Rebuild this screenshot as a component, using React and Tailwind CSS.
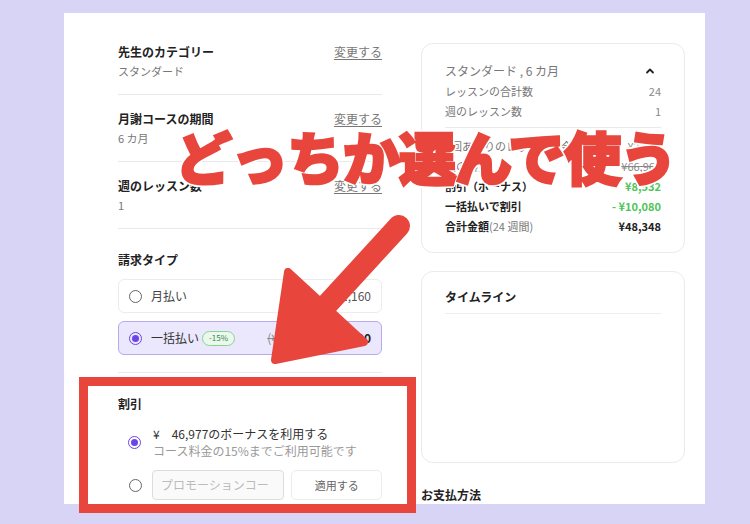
import React from "react";

const font = { fontFamily: '"Noto Sans CJK JP", "Noto Sans", sans-serif' };

function InfoRow({ title, value }) {
  return (
    <div className="flex justify-between items-start border-b border-[#e9e9e9] pt-[14px] pb-[14px]">
      <div>
        <div className="text-[12px] font-bold leading-[20px] text-[#222]">{title}</div>
        <div className="text-[11px] leading-[18px] text-[#777]">{value}</div>
      </div>
      <span className="text-[12px] leading-[20px] text-[#777] underline underline-offset-2">変更する</span>
    </div>
  );
}

function Radio({ checked }) {
  if (checked) {
    return (
      <span className="w-[13px] h-[13px] rounded-full border-[1.5px] border-[#6b46e5] flex items-center justify-center shrink-0">
        <span className="w-[7px] h-[7px] rounded-full bg-[#6b46e5]" />
      </span>
    );
  }
  return <span className="w-[13px] h-[13px] rounded-full border-[1.5px] border-[#666] shrink-0" />;
}

function SumRow({ label, value, bold, green, strike, sub }) {
  return (
    <div className="flex justify-between items-center text-[11px] leading-[20px]">
      <span className={bold ? "font-bold text-[#222]" : "text-[#777]"}>
        {label}
        {sub && <span className="font-normal text-[#777]">{sub}</span>}
      </span>
      <span
        className={
          (green ? "text-[#4fc45a] font-bold" : bold ? "font-bold text-[#222]" : "text-[#888]") +
          (strike ? " line-through" : "")
        }
      >
        {value}
      </span>
    </div>
  );
}

export default function App() {
  return (
    <div className="relative w-[750px] h-[524px] bg-[#d8d4f5] overflow-hidden" style={font}>
      <div className="pl-[64px] pt-[13px]">
        <div className="w-[641px] h-[491px] bg-white flex overflow-hidden">
          {/* left column */}
          <div className="ml-[54px] w-[264px] pt-[15px]">
            <InfoRow title="先生のカテゴリー" value="スタンダード" />
            <InfoRow title="月謝コースの期間" value="6 カ月" />
            <InfoRow title="週のレッスン数" value="1" />

            <div className="pt-[21px] pb-[17px] border-b border-[#e9e9e9]">
              <div className="text-[12px] font-bold leading-[20px] text-[#222]">請求タイプ</div>
              <div className="mt-[9px] h-[34px] flex items-center gap-[9px] px-[10px] rounded-[6px] border border-[#ececec] text-[12px] text-[#444]">
                <Radio />
                <span>月払い</span>
                <span className="ml-auto text-[#555]">¥11,160</span>
              </div>
              <div className="mt-[8px] h-[34px] flex items-center gap-[9px] px-[10px] rounded-[6px] border border-[#b9a9ef] bg-[#ebe7fd] text-[12px] text-[#333]">
                <Radio checked />
                <span className="flex items-center">
                  一括払い
                  <span className="ml-[3px] px-[6px] h-[15px] flex items-center rounded-full border border-[#86d494] bg-[#ebf8ee] text-[8px] text-[#3a8a47]">
                    -15%
                  </span>
                </span>
                <span className="ml-auto flex items-center gap-[6px]">
                  <span className="text-[#888] line-through">(¥66,960)</span>
                  <span className="font-bold text-[#222]">¥56,880</span>
                </span>
              </div>
            </div>

            <div className="pt-[21px]">
              <div className="text-[12px] font-bold leading-[20px] text-[#222]">割引</div>
              <div className="mt-[11px] flex items-center pl-[10px] gap-[12px]">
                <Radio checked />
                <div>
                  <div className="text-[12px] leading-[18px] text-[#333]">¥　46,977のボーナスを利用する</div>
                  <div className="text-[12px] leading-[16px] text-[#999]">コース料金の15%までご利用可能です</div>
                </div>
              </div>
              <div className="mt-[11px] flex items-center pl-[11px]">
                <Radio />
                <div className="ml-[10px] w-[133px] h-[30px] flex items-center px-[8px] rounded-[4px] border border-[#dcdcdc] bg-[#fafafa] text-[12px] text-[#bbb]">
                  プロモーションコー
                </div>
                <div className="ml-[7px] w-[91px] h-[30px] flex items-center justify-center rounded-[5px] border border-[#ececec] text-[11px] text-[#666]">
                  適用する
                </div>
              </div>
            </div>
          </div>

          {/* right column */}
          <div className="ml-[39px] w-[264px] pt-[30px]">
            <div className="rounded-[12px] border border-[#ebebeb] px-[23px] pt-[17px] pb-[16px]">
              <div className="flex justify-between items-center text-[12px] leading-[20px] text-[#777]">
                <span>スタンダード , 6 カ月</span>
                <svg width="10" height="10" viewBox="0 0 10 10" className="mr-[6px]">
                  <path d="M2 6.5 L5 3.5 L8 6.5" fill="none" stroke="#222" strokeWidth="1.8" strokeLinecap="round" strokeLinejoin="round" />
                </svg>
              </div>
              <SumRow label="レッスンの合計数" value="24" />
              <SumRow label="週のレッスン数" value="1" />
              <div className="mt-[6px] border-t border-[#e9e9e9] pt-[8px]">
                <SumRow label="1回あたりのレッスン料金" value="¥2,015" />
                <SumRow label="元の料金" value="¥66,960" strike />
                <SumRow label="割引（ボーナス）" value="¥8,532" bold green />
                <SumRow label="一括払いで割引" value="- ¥10,080" bold green />
                <SumRow label="合計金額" sub="(24 週間)" value="¥48,348" bold />
              </div>
            </div>

            <div className="mt-[18px] h-[192px] rounded-[12px] border border-[#ebebeb] px-[23px] pt-[15px]">
              <div className="pb-[6px] border-b border-[#ededed] text-[12px] font-bold leading-[20px] text-[#222]">タイムライン</div>
            </div>

            <div className="mt-[22px] text-[12px] font-bold leading-[20px] text-[#222]">お支払方法</div>
          </div>
        </div>
      </div>

      {/* annotation: red frame */}
      <div className="absolute left-[79px] top-[377px] w-[337px] h-[136px] border-[9px] border-[#e8453c]" />

      {/* annotation: arrow */}
      <svg className="absolute left-0 top-0 pointer-events-none" width="750" height="524" viewBox="0 0 750 524">
        <line x1="322" y1="310" x2="399" y2="226" stroke="#e8453c" strokeWidth="22" strokeLinecap="round" />
        <polygon points="275,360 288,272 364,342" fill="#e8453c" stroke="#e8453c" strokeWidth="8" strokeLinejoin="round" />
      </svg>

      {/* annotation: caption */}
      <div
        className="absolute left-[175px] top-[127px] text-[57px] font-black leading-none text-[#e8453c] whitespace-nowrap tracking-[-1px] [-webkit-text-stroke:2.5px_#e8453c] [text-shadow:3px_0_0_#fff,-3px_0_0_#fff,0_3px_0_#fff,0_-3px_0_#fff,2px_2px_0_#fff,-2px_2px_0_#fff,2px_-2px_0_#fff,-2px_-2px_0_#fff]"
        style={font}
      >
        どっちか選んで使う
      </div>
    </div>
  );
}
